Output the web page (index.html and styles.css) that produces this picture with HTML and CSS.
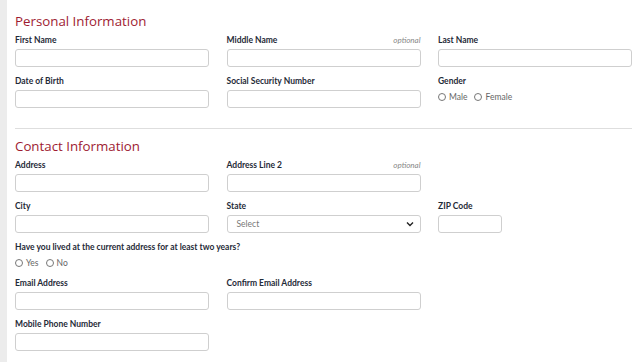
FILE: index.html
```html
<!DOCTYPE html>
<html lang="en">
<head>
  <meta charset="UTF-8" />
  <meta name="viewport" content="width=device-width, initial-scale=1.0" />
  <title>Application</title>
  <link rel="stylesheet" href="styles.css">
</head>
<body>
  <div class="page">
    <form class="form">

      <!-- Personal -->
      <section class="section">
        <h2>Personal Information</h2>
        <div class="row">
          <div class="field">
            <label>First Name</label>
            <input type="text" />
          </div>
          <div class="field">
            <label>Middle Name <span class="optional">optional</span></label>
            <input type="text" />
          </div>
          <div class="field">
            <label>Last Name</label>
            <input type="text" />
          </div>
        </div>
        <div class="row">
          <div class="field">
            <label>Date of Birth</label>
            <input type="text" />
          </div>
          <div class="field">
            <label>Social Security Number</label>
            <input type="text" />
          </div>
          <div class="field">
            <label>Gender</label>
            <div class="radios">
              <span class="radio"><i></i>Male</span>
              <span class="radio"><i></i>Female</span>
            </div>
          </div>
        </div>
      </section>

      <!-- Contact -->
      <section class="section contact">
        <h2>Contact Information</h2>
        <div class="row">
          <div class="field">
            <label>Address</label>
            <input type="text" />
          </div>
          <div class="field">
            <label>Address Line 2 <span class="optional">optional</span></label>
            <input type="text" />
          </div>
        </div>
        <div class="row">
          <div class="field">
            <label>City</label>
            <input type="text" />
          </div>
          <div class="field">
            <label>State</label>
            <div class="select">
              <span>Select</span>
              <svg width="8" height="6" viewBox="0 0 8 6"><path d="M1 1.5 L4 4.5 L7 1.5" fill="none" stroke="#222" stroke-width="1.4"/></svg>
            </div>
          </div>
          <div class="field">
            <label>ZIP Code</label>
            <input type="text" class="zip" />
          </div>
        </div>
        <div class="row">
          <div class="field wide">
            <label>Have you lived at the current address for at least two years?</label>
            <div class="radios">
              <span class="radio"><i></i>Yes</span>
              <span class="radio"><i></i>No</span>
            </div>
          </div>
        </div>
        <div class="row">
          <div class="field">
            <label>Email Address</label>
            <input type="text" />
          </div>
          <div class="field">
            <label>Confirm Email Address</label>
            <input type="text" />
          </div>
        </div>
        <div class="row">
          <div class="field">
            <label>Mobile Phone Number</label>
            <input type="text" />
          </div>
        </div>
      </section>

    </form>
  </div>
</body>
</html>
```

FILE: styles.css
```css
body {
  margin: 0;
  padding: 0;
  font-family: Lato, "Open Sans", sans-serif;
  background: white;
  color: #1f2b38;
}

.page {
  border-left: 7px solid #ececec;
  min-height: 100vh;
  padding: 12px 8px 0 8px;
}

.form {
  width: 617px;
}

.section h2 {
  font-family: "Open Sans", Lato, sans-serif;
  font-weight: 400;
  font-size: 13.3px;
  line-height: 18px;
  color: #9e1b32;
  margin: 0 0 4px 0;
}

.section {
  padding-bottom: 12px;
  border-bottom: 1px solid #dedede;
}

.section.contact {
  padding-top: 8px;
  border-bottom: none;
}

.row {
  display: grid;
  grid-template-columns: repeat(3, 1fr);
  column-gap: 17.5px;
  margin-bottom: 8px;
}

.field {
  display: flex;
  flex-direction: column;
}

.field.wide {
  grid-column: 1 / -1;
}

.field label {
  display: flex;
  justify-content: space-between;
  font-size: 8.5px;
  font-weight: 700;
  line-height: 12px;
  margin-bottom: 3px;
  color: #1f2b38;
}

.optional {
  font-weight: 400;
  font-style: italic;
  color: #888;
  font-size: 8px;
}

.field input,
.select {
  box-sizing: border-box;
  height: 18px;
  width: 100%;
  border: 1px solid #cfcfcf;
  border-radius: 3px;
  background: white;
  margin: 0;
  padding: 0 8px;
}

.field input.zip {
  width: 64px;
}

.select {
  display: flex;
  align-items: center;
  justify-content: space-between;
  font-size: 8.5px;
  color: #777;
  padding: 0 6px 0 9px;
}

.radios {
  display: flex;
  gap: 7px;
  height: 12px;
  align-items: center;
  margin-top: 1px;
}

.radio {
  display: flex;
  align-items: center;
  gap: 3px;
  font-size: 8.5px;
  color: #666;
}

.radio i {
  width: 6px;
  height: 6px;
  border: 1px solid #777;
  border-radius: 50%;
}
```
